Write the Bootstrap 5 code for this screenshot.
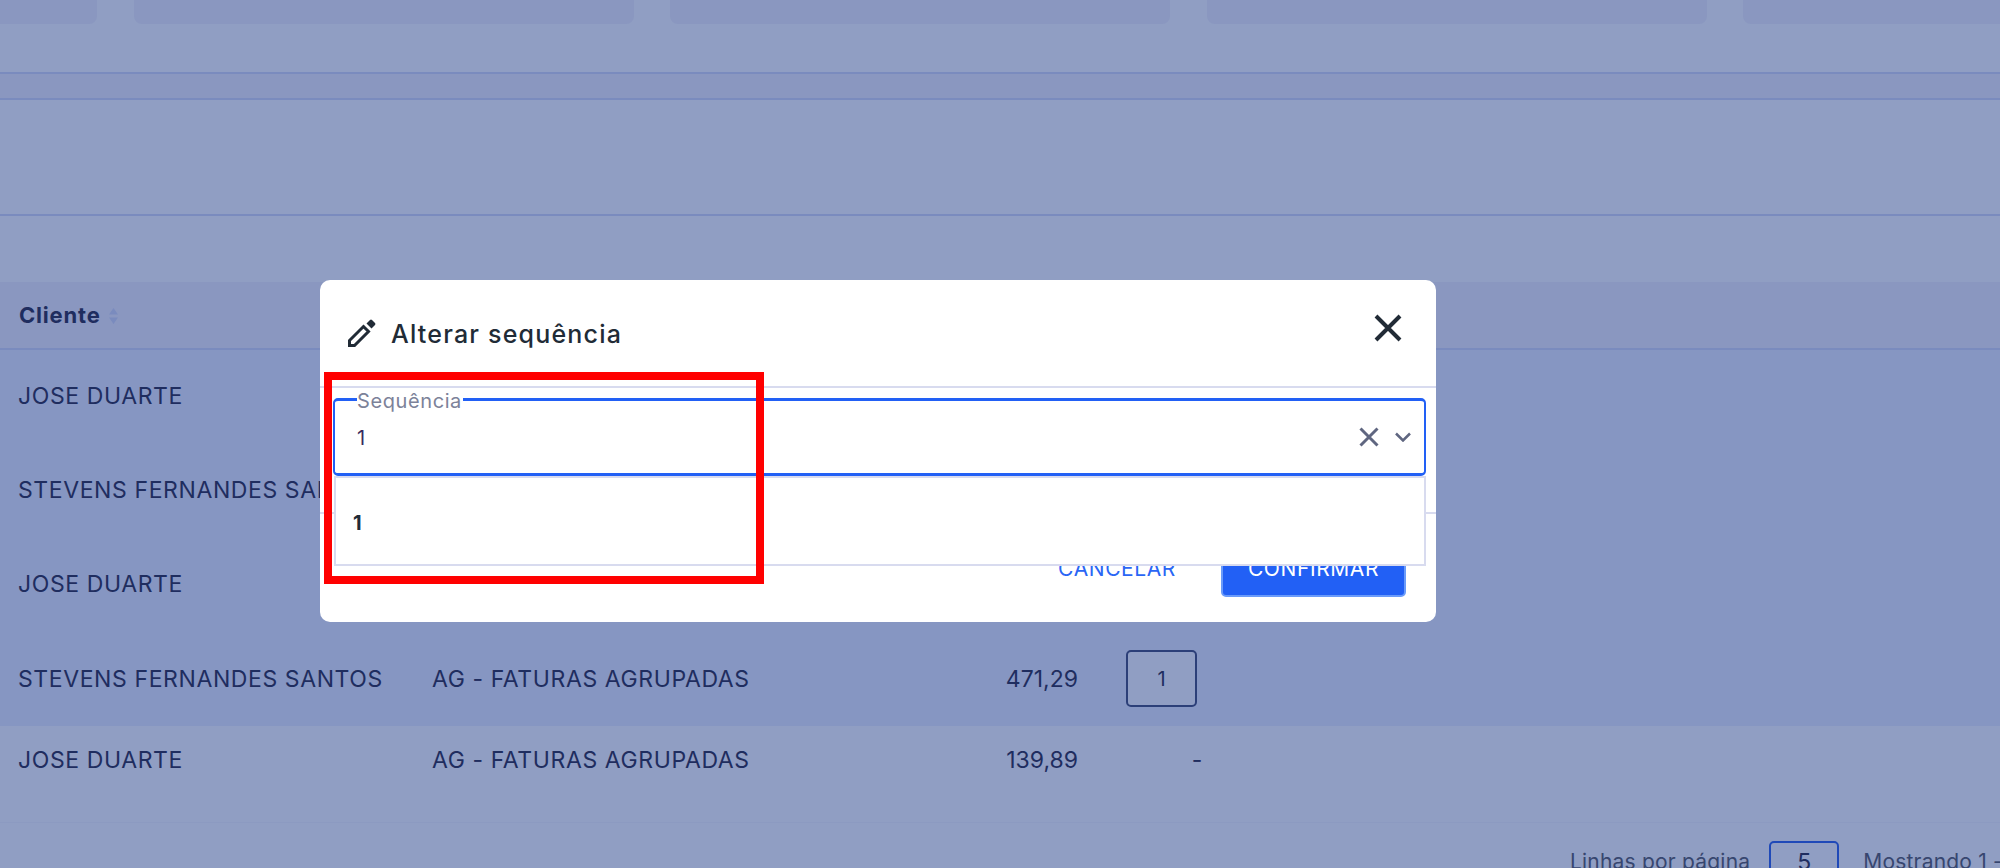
<!DOCTYPE html>
<html lang="pt-BR">
<head>
    <meta charset="UTF-8">
    <title>Alterar sequência</title>
    <link href="https://cdn.jsdelivr.net/npm/bootstrap@5.3.0/dist/css/bootstrap.min.css" rel="stylesheet">
    <style>
        body {
            height: 868px;
            overflow: hidden;
            background: #909ec3;
            color: #1f2d5f;
            font-family: Inter, "Liberation Sans", sans-serif;
            position: relative;
        }
        /* dimmed page behind the modal */
        .top-cards {
            height: 24px;
            margin-left: -403px;
            gap: 36.5px;
        }
        .top-card {
            flex: 0 0 500px;
            background: #8a97c0;
            border-radius: 0 0 8px 8px;
        }
        .tab-band {
            height: 28px;
            margin-top: 48px;
            background: #8a97c0;
            border-top: 2px solid #7a8bbe;
            border-bottom: 2px solid #7a8bbe;
        }
        .filter-band {
            height: 116px;
            border-bottom: 2px solid #7a8bbe;
        }
        .gap-band { height: 66px; }
        .seq-table {
            table-layout: fixed;
            width: 100%;
            margin: 0;
            --bs-table-bg: transparent;
            --bs-table-color: #1f2d5f;
            font-size: 23px;
            letter-spacing: .6px;
        }
        .seq-table th, .seq-table td {
            border: 0;
            padding: 0;
            vertical-align: middle;
            white-space: nowrap;
        }
        .seq-table thead tr { height: 67px; background: #8a97c0; }
        .seq-table thead th {
            border-bottom: 2px solid #7a8bbe;
            padding: 1px 0 0 19px;
            font-size: 22px;
            letter-spacing: .8px;
        }
        .seq-table tbody tr { height: 94.25px; background: #8696c2; }
        .seq-table tbody tr.row-light { height: 96px; background: #909ec3; }
        .seq-table tbody tr.row-light td { vertical-align: top; padding-top: 17px; }
        .seq-table .cell-name { padding-left: 18px; }
        .seq-table .cell-num { letter-spacing: 0; }
        .seq-box {
            width: 71px;
            height: 57px;
            margin-left: 48px;
            background: #909ec3;
            border: 2px solid #2c3f78;
            border-radius: 5px;
            font-size: 20px;
            letter-spacing: 0;
        }
        .pager {
            border-top: 1px solid #8c9ac1;
            padding: 18px 0 0 1570px;
            font-size: 21px;
            letter-spacing: .2px;
            white-space: nowrap;
            color: #37466f;
        }
        .pager-size {
            flex: 0 0 70px;
            height: 42px;
            margin: 0 24px 0 19px;
            border: 2px solid #1f49b8;
            border-radius: 5px;
            font-size: 23px;
            color: #1f2d5f;
        }
        /* modal */
        .seq-modal {
            position: absolute;
            left: 320px;
            top: 280px;
            width: 1116px;
            height: 342px;
            background: #fff;
            border: 0;
            border-radius: 10px;
            color: #212b36;
        }
        .seq-modal .modal-header {
            height: 108px;
            padding: 0 34px 0 28px;
            border-bottom: 2px solid #d8dbef;
            border-radius: 0;
        }
        .seq-title {
            font-size: 25px;
            font-weight: 500;
            letter-spacing: 1.2px;
            margin: 2px 0 0 15px;
        }
        .close-x { margin: -11px 0 0 auto; line-height: 0; }
        .seq-modal .modal-body {
            flex: 0 0 126px;
            padding: 10px 10px 0 13px;
            border-bottom: 2px solid #d8dbef;
        }
        .seq-select {
            height: 78px;
            border: solid #2260f5;
            border-width: 3px 2px;
            border-radius: 5px;
            padding: 0 13px 0 22px;
            font-size: 20px;
            position: relative;
        }
        .seq-label {
            position: absolute;
            left: 22px;
            top: -10px;
            padding-right: 1px;
            background: #fff;
            color: #7c8299;
            font-size: 20px;
            letter-spacing: .6px;
            line-height: 20px;
        }
        .seq-value { color: #3a2a5e; margin-top: 2px; }
        .seq-menu {
            position: absolute;
            left: -1px;
            right: -2px;
            top: 75px;
            height: 90px;
            padding: 3px 0 0 17px;
            margin: 0;
            border: 2px solid #d8dbef;
            border-radius: 0;
            font-size: 20px;
            font-weight: 700;
            color: #212b36;
            z-index: 2;
        }
        .seq-modal .modal-footer {
            flex: 0 0 108px;
            padding: 0 30px 25px 0;
            border: 0;
            align-items: flex-end;
            gap: 45px;
        }
        .btn-cancel, .btn-confirm {
            margin: 0;
            height: 57px;
            font-size: 21px;
            letter-spacing: .6px;
            border-radius: 5px;
        }
        .btn-cancel {
            padding: 0;
            border: 0;
            color: #2a66f5;
        }
        .btn-confirm {
            width: 185px;
            padding: 0;
            background: #2260f5;
            border: 2px solid #6a9bfa;
            color: #fff;
        }
        /* annotation drawn on top of the screenshot */
        .red-frame {
            position: absolute;
            left: 324px;
            top: 372px;
            width: 440px;
            height: 212px;
            border: 8px solid #f00;
            z-index: 5;
        }
    </style>
</head>
<body>
    <div class="d-flex top-cards">
        <div class="top-card"></div>
        <div class="top-card"></div>
        <div class="top-card"></div>
        <div class="top-card"></div>
        <div class="top-card"></div>
    </div>
    <div class="tab-band"></div>
    <div class="filter-band"></div>
    <div class="gap-band"></div>

    <table class="table seq-table">
        <colgroup>
            <col style="width: 432px">
            <col style="width: 468px">
            <col style="width: 178px">
            <col style="width: 125px">
            <col>
        </colgroup>
        <thead>
            <tr>
                <th>
                    <span class="d-inline-flex align-items-center gap-2">Cliente
                        <svg width="9" height="16" viewBox="0 0 9 16"><path d="M4.500 0 9 6.500H0zM4.500 16 0 9.500h9z" fill="#7a8bbe"/></svg>
                    </span>
                </th>
                <th></th><th></th><th></th><th></th>
            </tr>
        </thead>
        <tbody>
            <tr><td class="cell-name">JOSE DUARTE</td><td></td><td></td><td></td><td></td></tr>
            <tr><td class="cell-name">STEVENS FERNANDES SANTOS</td><td></td><td></td><td></td><td></td></tr>
            <tr><td class="cell-name">JOSE DUARTE</td><td></td><td></td><td></td><td></td></tr>
            <tr>
                <td class="cell-name">STEVENS FERNANDES SANTOS</td>
                <td>AG - FATURAS AGRUPADAS</td>
                <td class="text-end cell-num">471,29</td>
                <td><div class="seq-box d-flex align-items-center justify-content-center">1</div></td>
                <td></td>
            </tr>
            <tr class="row-light">
                <td class="cell-name">JOSE DUARTE</td>
                <td>AG - FATURAS AGRUPADAS</td>
                <td class="text-end cell-num">139,89</td>
                <td class="text-end">-</td>
                <td></td>
            </tr>
        </tbody>
    </table>

    <div class="pager d-flex align-items-center">
        <span>Linhas por página</span>
        <div class="pager-size d-flex align-items-center justify-content-center">5</div>
        <span>Mostrando 1 -</span>
    </div>

    <div class="modal-content seq-modal">
        <div class="modal-header">
            <svg width="28" height="28" viewBox="0 0 28 28">
                <path d="M1.500 21.500 15.500 7.500 20.500 12.500 6.500 26.500H1.500z" fill="#fff" stroke="#212b36" stroke-width="3"/>
                <path d="M18.500 4.500 22 1a1.500 1.500 0 0 1 2 0L27 4a1.500 1.500 0 0 1 0 2L23.500 9.500z" fill="#212b36"/>
            </svg>
            <h5 class="seq-title">Alterar sequência</h5>
            <button class="btn p-0 border-0 close-x" type="button" aria-label="Fechar">
                <svg width="28" height="28" viewBox="0 0 28 28"><path d="M2 2 26 26M26 2 2 26" stroke="#212b36" stroke-width="4" fill="none"/></svg>
            </button>
        </div>
        <div class="modal-body">
            <div class="seq-select d-flex align-items-center">
                <span class="seq-label">Sequência</span>
                <span class="seq-value">1</span>
                <svg class="ms-auto" width="20" height="20" viewBox="0 0 20 20"><path d="M1.500 1.500 18.500 18.500M18.500 1.500 1.500 18.500" stroke="#5f6680" stroke-width="3" fill="none"/></svg>
                <svg class="ms-3" width="16" height="10" viewBox="0 0 16 10"><path d="M1 1.500 8 8.500 15 1.500" stroke="#5f6680" stroke-width="2.500" fill="none"/></svg>
                <div class="dropdown-menu show d-flex align-items-center seq-menu">1</div>
            </div>
        </div>
        <div class="modal-footer">
            <button class="btn btn-cancel" type="button">CANCELAR</button>
            <button class="btn btn-confirm" type="button">CONFIRMAR</button>
        </div>
    </div>

    <div class="red-frame"></div>

    <script src="https://cdn.jsdelivr.net/npm/bootstrap@5.3.0/dist/js/bootstrap.bundle.min.js"></script>
</body>
</html>
